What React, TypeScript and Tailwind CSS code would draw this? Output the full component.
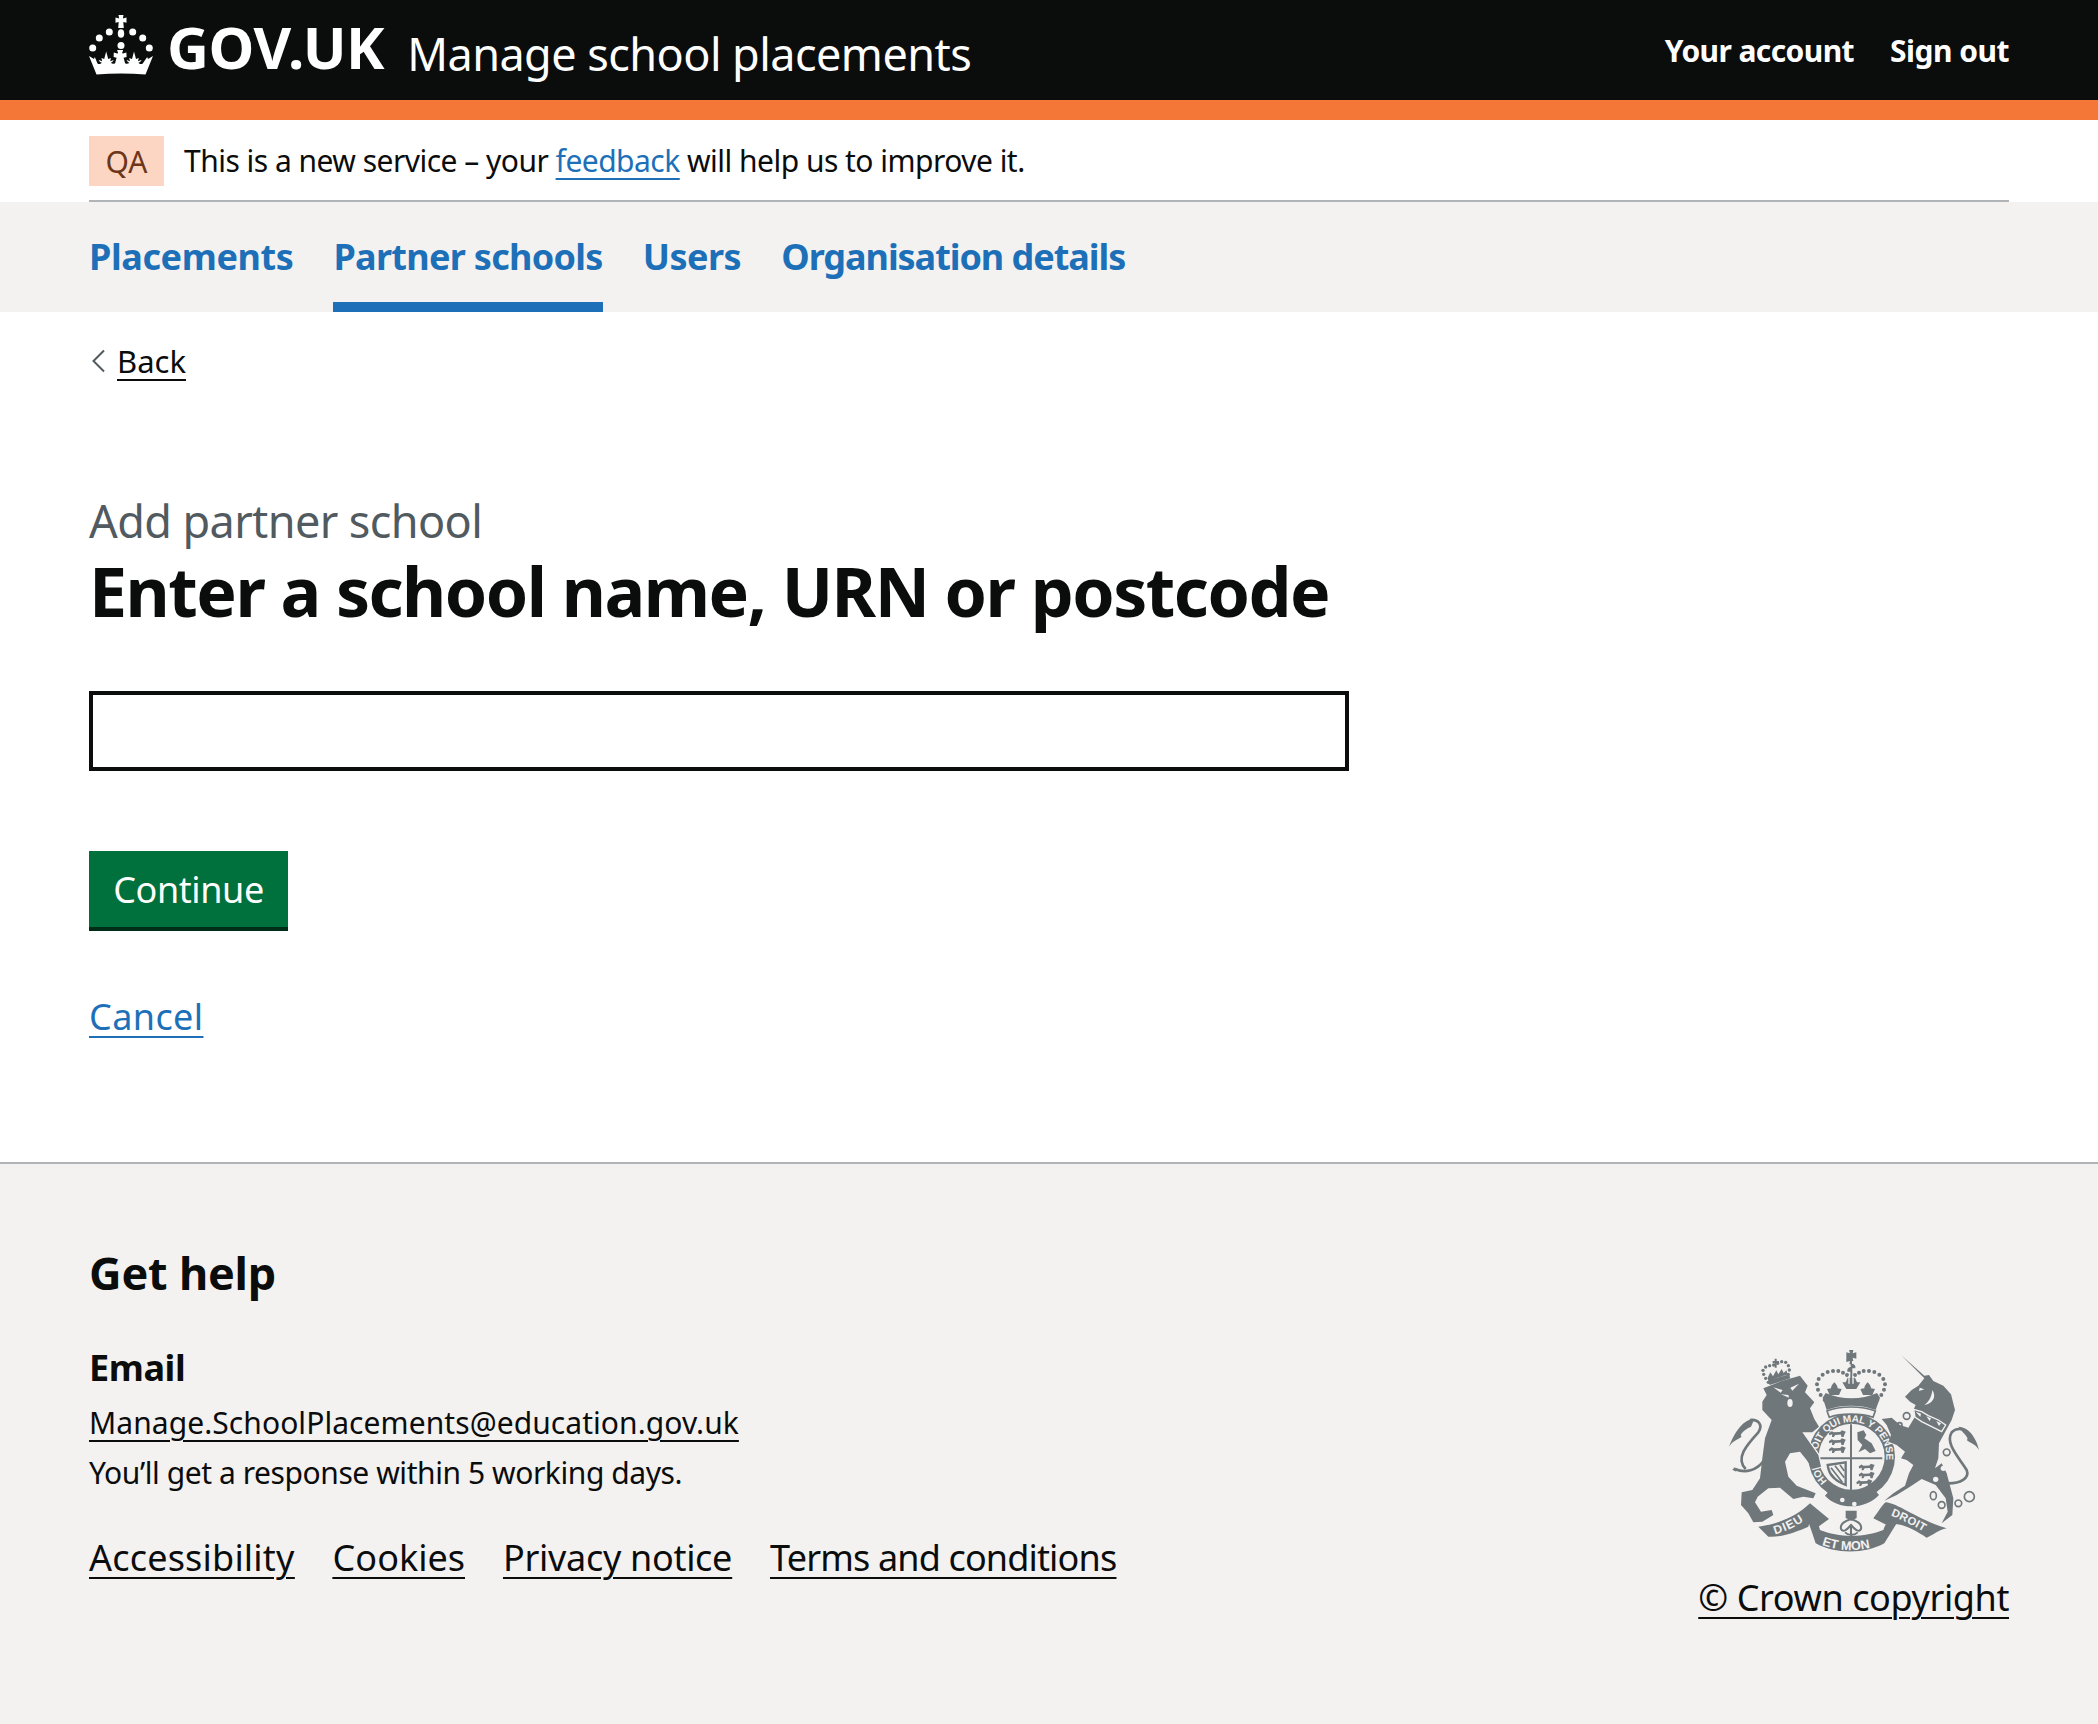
import React from "react";

function Crown() {
  return (
    <svg width="64" height="60" viewBox="0 0 64 60" fill="#fff" className="shrink-0 mb-[10px]">
      <path d="M29.500 0h5l-.6 3.400 3.600-.9v5.200l-3.200-.8.500 6h-5.600l.500-6-3.200.8V2.500l3.600.9z" />
      <ellipse cx="32" cy="18.500" rx="3.200" ry="4.300" />
      <circle cx="20.300" cy="17" r="3.500" />
      <circle cx="43.700" cy="17" r="3.500" />
      <circle cx="10.300" cy="23" r="3.500" />
      <circle cx="53.700" cy="23" r="3.500" />
      <circle cx="3.700" cy="33" r="3.500" />
      <circle cx="60.300" cy="33" r="3.500" />
      <circle cx="32" cy="30.500" r="3.500" />
      <path d="M0 41l5 3 .8-2 2.700 6.500c1.500 1 3.200.6 4.300-.8-1.800-.6-2.800-1.400-3-2.700l3.400 1.200-.8-3.200 2.800 1 2-7.500 2 7.500 2.800-1-.8 3.200 3.400-1.200c-.3 1.300-1.200 2-2.800 2.700 1.200 1.200 2.800 1.500 4.300.5l1.500-5.500-3-.8.200-4.400 3.300.9 1-.1-1-3.300h6l-1 3.300 1 .1 3.300-.9.200 4.400-3 .8 1.500 5.500c1.500 1 3.100.7 4.300-.5-1.600-.7-2.500-1.400-2.800-2.700l3.400 1.200-.8-3.200 2.800 1 2-7.500 2 7.500 2.800-1-.8 3.200 3.400-1.200c-.2 1.300-1.200 2.100-3 2.700 1.100 1.400 2.800 1.800 4.300.8L58.200 42l.8 2 5-3-7.500 18.500c-16-1.200-33-1.200-49 0z" />
    </svg>
  );
}

function Crest() {
  const c = "#6f777b";
  const bg = "#f3f2f1";
  const dots: [number, number][] = [
    [299, 165], [287, 150], [279, 134], [276, 118], [281, 102], [293, 89], [308, 81], [324, 78], [340, 78], [354, 83], [366, 90],
    [390, 90], [402, 83], [416, 78], [432, 78], [448, 81], [463, 89], [475, 102], [480, 118], [477, 134], [469, 150], [457, 165],
  ];
  const lionDots: [number, number][] = [
    [130, 112], [122, 100], [116, 88], [114, 76], [122, 66], [134, 62], [146, 60], [158, 55], [170, 50], [182, 52], [190, 62], [193, 75], [190, 88],
  ];
  const passant = "M-30 -4L-20 -11L-12 -7L10 -8L16 -14L30 -9L26 -2L22 9L15 9L12 1L-8 2L-12 9L-19 9L-18 0L-28 3Z";
  const f = "Liberation Sans, sans-serif";
  return (
    <svg width="260" height="212" viewBox="0 0 780 636" className="block">
      <defs>
        <path id="garter" d="M306.500 408.500A104 104 0 1 1 436.600 422.200" fill="none" />
        <path id="et-mon" d="M290 600Q380 632 470 598" fill="none" />
        <path id="dieu" d="M150 568Q215 550 258 510" fill="none" />
        <path id="droit" d="M497 512Q556 535 612 570" fill="none" />
        <clipPath id="shield-clip">
          <path d="M290 240H468V352C468 395 425 425 378 445C332 425 290 395 290 352Z" />
        </clipPath>
      </defs>

      {/* garter + shield */}
      <circle cx="380" cy="335" r="130" fill={c} />
      <circle cx="380" cy="335" r="99" fill={bg} />
      <g clipPath="url(#shield-clip)">
        <circle cx="380" cy="335" r="92" fill={bg} />
      </g>
      {[268, 292, 316].map((y) => (
        <path key={y} d={passant} transform={`translate(337 ${y}) scale(.85 .85)`} fill={c} />
      ))}
      {[368, 392, 415].map((y, i) => (
        <path key={y} d={passant} transform={`translate(${i === 2 ? 418 : 425} ${y}) scale(.8 .85)`} fill={c} />
      ))}
      <path d="M397 262L416 256L424 270L418 280L440 295L452 318L435 325L420 312L400 322L412 300L398 285Z" fill={c} />
      <path d="M308 360L362 352V420C335 408 312 395 308 360Z" fill="none" stroke={c} strokeWidth="7" />
      <path d="M318 368L352 412M330 362L358 398M345 360L358 378M314 382L336 408" stroke={c} strokeWidth="5" />
      <path d="M378 238V438M284 340H472" stroke={c} strokeWidth="6" />
      <text fontFamily={f} fontWeight="700" fontSize="30" fill={bg} letterSpacing="-0.3">
        <textPath href="#garter">HONI SOIT QUI MAL Y PENSE</textPath>
      </text>
      <path d="M312 438C350 460 410 460 450 436L462 450C420 495 340 495 300 452Z" fill={c} />
      <circle cx="352" cy="465" r="7" fill={bg} />
      <circle cx="388" cy="477" r="7" fill={bg} />

      {/* big crown */}
      {dots.map(([x, y]) => (
        <circle key={`${x}-${y}`} cx={x} cy={y} r="6" fill={c} />
      ))}
      <path
        fill={c}
        d="M372 15h13l-2 10 11-3v19l-11-3 2 10h-4v8c6 1 9 4 10 8v6h-9v28h8l6 14 10 0-12 20h-30l-12-20 10 0 6-14h8V80h-9v-6c1-4 4-7 10-8v-8h-4l2-10-11 3V22l11 3z"
      />
      <path d="M370 92h4v24h-4zM382 92h4v24h-4z" fill={bg} />
      <path fill={c} d="M328 112c6 6 10 12 10 18l12 2-8 18h-28l-8-18 12-2c0-6 4-12 10-18zM428 112c6 6 10 12 10 18l12 2-8 18h-28l-8-18 12-2c0-6 4-12 10-18z" />
      <path fill={c} d="M293 158L302 144C350 165 410 165 456 144L465 158L452 195C410 178 345 178 305 195Z" />
      <path d="M306 198C345 182 410 182 451 198L444 217C410 204 345 204 313 217Z" fill={bg} stroke={c} strokeWidth="5" />

      {/* lion */}
      <path fill="none" stroke={bg} strokeWidth="8" d="M230 262L280 330L288 365L262 372" />
      <path
        fill={c}
        d="M115 130L170 108L225 92L248 122L240 142L268 172L255 190L268 222L282 245L262 262L232 262L280 330L288 365L262 372L245 345L225 320L195 325L180 350L190 395L215 422L272 445L265 460L235 455L205 462L165 428L130 430L98 455L90 472L108 500L140 495L145 510L112 530L85 532L70 505L48 480L50 442L82 435L105 400L112 340L120 280L140 225L112 195L112 170L125 150Z"
      />
      <path d="M145 127l28 8-6 8zM222 116l-26 12 6 9zM168 148l22 2 2 8z" fill={bg} />
      <ellipse cx="195" cy="174" rx="8" ry="12" fill={bg} />
      <path fill="none" stroke={c} strokeWidth="8" d="M118 345C95 378 60 385 30 372" />
      <path fill="none" stroke={c} strokeWidth="8" d="M62 372C30 340 65 300 100 262C115 240 100 222 75 225" />
      <path fill={c} d="M88 222C55 222 30 260 12 305C25 285 38 285 50 275C42 270 55 255 78 245z" />
      <path d="M30 366l-8 8 12 6z" fill={c} />

      {/* lion crown */}
      {lionDots.map(([x, y]) => (
        <circle key={`${x}-${y}`} cx={x} cy={y} r="5" fill={c} />
      ))}
      <path fill={c} d="M128 108L192 88L196 100L134 120zM143 48h6v-7h6v7h7v6h-7v14h-6V54h-6zM128 98l8-16 8 12 10-18 6 12 10-16 6 12 8-8 4 12-58 20z" />

      {/* unicorn */}
      <path fill="none" stroke={bg} strokeWidth="6" d="M470 222L500 218L525 240M490 290L515 300L540 320L528 340" />
      <path
        fill={c}
        d="M528 30L598 92L612 90L625 108L655 122L678 148L690 195L680 225L660 262L642 295L640 340L630 370L650 355L665 385L685 460L682 510L650 535L668 500L662 460L632 420L590 402L555 425L515 450L478 467L505 445L540 422L552 385L565 360L545 345L528 340L540 320L515 300L490 290L498 270L485 240L470 222L500 218L525 240L550 248L570 215L565 195L572 180L555 170L540 155L560 135L580 122L598 100Z"
      />
      <path fill={bg} d="M584 128l14 5-16 5zM622 135C635 155 625 175 598 180C612 170 620 155 622 135z" />
      <path fill="none" stroke={bg} strokeWidth="4" d="M566 193L590 200L610 212L640 225L662 240L650 260L620 245L590 230L570 216Z" />
      <path fill={bg} d="M572 200l16 6-2 10zM604 214l14 6-4 8zM634 228l14 7-6 8z" />
      <g fill="none" stroke={c} strokeWidth="5">
        <circle cx="545" cy="213" r="10" />
        <circle cx="524" cy="240" r="7" />
        <circle cx="530" cy="295" r="10" />
        <circle cx="665" cy="322" r="10" />
        <ellipse cx="625" cy="452" rx="9" ry="12" />
        <circle cx="650" cy="480" r="10" />
        <circle cx="700" cy="475" r="10" />
        <circle cx="733" cy="455" r="15" />
      </g>
      <circle cx="655" cy="370" r="8" fill={bg} />
      <circle cx="632" cy="403" r="8" fill={bg} />
      <path fill="none" stroke={c} strokeWidth="8" d="M670 415C705 415 735 400 725 375C700 335 660 295 680 262C695 245 725 250 740 275" />
      <path fill={c} d="M700 245C730 245 755 280 762 315C750 295 735 295 725 285C735 280 715 265 700 245z" />

      {/* ribbons */}
      <path fill={c} d="M100 545C155 538 215 515 255 475L312 522L280 545C270 525 255 522 250 545C215 560 170 578 130 575Z" />
      <path fill={c} d="M665 550C640 555 625 570 605 578C570 555 515 525 485 540L445 520C460 500 470 482 482 472C520 475 580 525 665 550Z" />
      <path fill={c} d="M250 530C265 515 280 530 285 555C340 578 420 578 475 555C485 525 500 520 515 535L478 595C420 628 330 628 272 595Z" />
      <text fontFamily={f} fontWeight="700" fontSize="36" fill={bg} letterSpacing="3">
        <textPath href="#dieu">DIEU</textPath>
      </text>
      <text fontFamily={f} fontWeight="700" fontSize="34" fill={bg} letterSpacing="1">
        <textPath href="#droit">DROIT</textPath>
      </text>
      <text fontFamily={f} fontWeight="700" fontSize="38" fill={bg}>
        <textPath href="#et-mon">ET MON</textPath>
      </text>

      {/* fleur */}
      <path fill={c} d="M362 497h33v22l-16 8-17-8z" />
      <path fill="none" stroke={c} strokeWidth="6" d="M378 522C362 528 344 535 348 552C355 565 368 552 378 540C388 552 402 565 408 552C412 535 394 528 378 522ZM378 540V576M360 562C370 572 388 572 398 562" />
    </svg>
  );
}

export default function App() {
  return (
    <div className="font-['Noto_Sans',sans-serif] min-h-[1724px] bg-white text-[#0b0c0c] flex flex-col">
      <header className="bg-[#0b0c0c] border-b-[20px] border-[#f47738] h-[120px] px-[89px] flex items-center justify-between text-white">
        <div className="flex items-center">
          <Crown />
          <span className="ml-[14px] mb-[6px] text-[58px] leading-none font-bold tracking-[-0.4px]">GOV.UK</span>
          <span className="ml-[23px] mt-[6px] text-[45px] leading-none tracking-[-0.55px]">Manage school placements</span>
        </div>
        <nav className="flex gap-[36px] text-[30px] font-bold leading-none mt-[2px]">
          <a className="tracking-[-0.6px]">Your account</a>
          <a className="tracking-[-0.5px]">Sign out</a>
        </nav>
      </header>

      <div className="px-[89px]">
        <div className="h-[82px] border-b-2 border-[#b1b4b6] flex items-center text-[30px] pt-[2px]">
          <strong className="font-normal bg-[#fcd6c3] text-[#6e3619] w-[75px] h-[50px] flex items-center justify-center mr-[20px]">QA</strong>
          <span className="tracking-[-0.52px] mb-[2px]">
            This is a new service – your{" "}
            <a className="text-[#1d70b8] underline underline-offset-[6px] decoration-2">feedback</a> will help us to improve it.
          </span>
        </div>
      </div>

      <nav className="bg-[#f3f2f1] h-[110px] px-[89px] flex gap-[40px] text-[36px] font-bold text-[#1d70b8]">
        <a className="pt-[28px] tracking-[-0.4px]">Placements</a>
        <a className="pt-[28px] border-b-[10px] border-[#1d70b8] tracking-[-0.7px]">Partner schools</a>
        <a className="pt-[28px] tracking-[-0.5px]">Users</a>
        <a className="pt-[28px] tracking-[-1.05px]">Organisation details</a>
      </nav>

      <main className="px-[89px] flex-1">
        <a className="flex items-center mt-[29px] text-[31px] leading-[40px]">
          <svg width="16" height="24" viewBox="0 0 16 24" fill="none" stroke="#505a5f" strokeWidth="2" className="ml-[2px] mr-[10px]">
            <path d="M13 1.500L2.500 12L13 22.500" />
          </svg>
          <span className="underline underline-offset-[6px] decoration-2">Back</span>
        </a>

        <span className="block mt-[112px] text-[45px] leading-[56px] text-[#505a5f] tracking-[-0.6px]">Add partner school</span>
        <h1 className="mt-[2px] text-[68px] leading-[80px] font-bold tracking-[-1.5px]">Enter a school name, URN or postcode</h1>

        <div className="mt-[60px] w-[1260px] h-[80px] border-4 border-[#0b0c0c] bg-white" />

        <button className="mt-[80px] block h-[80px] w-[199px] bg-[#00703c] text-white text-[36px] tracking-[-0.4px] border-b-4 border-[#002d18] pt-[2px]">Continue</button>

        <a className="block mt-[61px] text-[36px] leading-[50px] text-[#1d70b8] underline underline-offset-[6px] decoration-2 tracking-[0.4px]">Cancel</a>
      </main>

      <footer className="bg-[#f3f2f1] border-t-2 border-[#b1b4b6] h-[562px] px-[89px] pt-[79px] flex justify-between">
        <div>
          <h2 className="text-[45px] leading-[60px] font-bold tracking-[-0.2px]">Get help</h2>
          <h3 className="mt-[40px] text-[36px] leading-[50px] font-bold tracking-[-0.4px]">Email</h3>
          <a className="block mt-[10px] text-[30px] leading-[40px] tracking-[0.07px] underline underline-offset-[6px] decoration-2">Manage.SchoolPlacements@education.gov.uk</a>
          <p className="mt-[10px] text-[30px] leading-[40px] tracking-[-0.43px]">You’ll get a response within 5 working days.</p>
          <div className="mt-[40px] flex gap-[38px] text-[36px] leading-[50px] underline underline-offset-[6px] decoration-2">
            <a className="tracking-[0.2px]">Accessibility</a>
            <a>Cookies</a>
            <a className="tracking-[-0.3px]">Privacy notice</a>
            <a className="tracking-[-0.85px]">Terms and conditions</a>
          </div>
        </div>
        <div className="mt-[102px] flex flex-col items-end">
          <div className="mr-[24px]"><Crest /></div>
          <a className="mt-[16px] text-[36px] leading-[50px] underline underline-offset-[6px] decoration-2 tracking-[-0.4px]">© Crown copyright</a>
        </div>
      </footer>
    </div>
  );
}
